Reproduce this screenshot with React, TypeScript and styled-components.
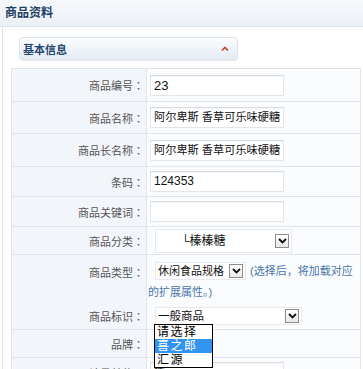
import React from 'react';
import styled, { createGlobalStyle } from 'styled-components';

const GlobalStyle = createGlobalStyle`
  html, body {
    margin: 0;
    padding: 0;
    background: #fff;
    width: 363px;
    height: 369px;
    overflow: hidden;
  }
  body {
    font-family: "Liberation Sans", "Noto Sans CJK SC", sans-serif;
    font-size: 12px;
    color: #333;
  }
  * {
    box-sizing: border-box;
  }
`;

const Header = styled.div`
  height: 27px;
  line-height: 26px;
  padding-left: 5px;
  border-bottom: 1px solid #dbe2ea;
  background: linear-gradient(#f7f9fc, #ebf0f6);
  font-size: 12px;
  font-weight: bold;
  color: #1e3f66;
`;

const Panel = styled.div`
  margin: 0 1px 0 2px;
  padding: 10px 0 0 8px;
  border-left: 1px solid #dfe5ec;
  height: 342px;
  overflow: hidden;
`;

const SectionBar = styled.div`
  width: 219px;
  height: 23px;
  margin-left: 8px;
  padding: 0 8px 0 3px;
  display: flex;
  align-items: center;
  justify-content: space-between;
  border: 1px solid #dbe3ec;
  border-radius: 4px;
  background: linear-gradient(#fafcfe, #e5ecf4);
  box-shadow: 0 1px 1px rgba(150, 170, 190, 0.25);
  font-size: 11px;
  font-weight: bold;
  color: #22466f;
`;

const Table = styled.div`
  width: 350px;
  margin-top: 8px;
  border: 1px solid #dfe4ea;
  border-bottom: none;
`;

const Row = styled.div<{ $h: number }>`
  display: grid;
  grid-template-columns: 135px 1fr;
  height: ${(p) => p.$h}px;
  border-bottom: 1px solid #e1e6ec;
`;

const Label = styled.div<{ $top?: boolean }>`
  display: flex;
  justify-content: flex-end;
  align-items: ${(p) => (p.$top ? 'flex-start' : 'center')};
  padding: ${(p) => (p.$top ? '9px 2px 0 0' : '0 2px 0 0')};
  border-right: 1px solid #e1e6ec;
  background: #f2f6fa;
  font-size: 11px;
  color: #555;
`;

const Colon = styled.span`
  font-family: "Noto Sans CJK JP", sans-serif;
`;

const Value = styled.div<{ $flow?: boolean }>`
  display: ${(p) => (p.$flow ? 'block' : 'flex')};
  align-items: center;
  padding: ${(p) => (p.$flow ? '5px 4px 0 1px' : '0 0 0 1px')};
  line-height: ${(p) => (p.$flow ? '20px' : 'normal')};
  background: #fbfcfd;
`;

const Field = styled.div<{ $size?: number }>`
  width: 134px;
  height: 21px;
  margin-left: 2px;
  padding-left: 3px;
  border: 1px solid #e2e6eb;
  border-top-color: #d6dce3;
  background: #fff;
  box-shadow: inset 0 1px 1px rgba(0, 0, 0, 0.04);
  font-size: ${(p) => p.$size ?? 11.2}px;
  line-height: 19px;
  color: #111;
  white-space: nowrap;
  overflow: hidden;
`;

const SelectBox = styled.div<{ $w: number; $h: number; $indent?: number }>`
  position: relative;
  display: inline-flex;
  align-items: center;
  vertical-align: middle;
  width: ${(p) => p.$w}px;
  height: ${(p) => p.$h}px;
  margin-left: 7px;
  padding: 0 2px 0 ${(p) => p.$indent ?? 2}px;
  border: 1px solid #e6e9ed;
  background: #fff;
  font-size: 11.5px;
  line-height: 14px;
  color: #111;
`;

const SelectText = styled.span<{ $size?: number }>`
  flex: 1;
  min-width: 0;
  font-size: ${(p) => p.$size ?? 11.5}px;
  white-space: nowrap;
  overflow: hidden;
`;

const ArrowBox = styled.span`
  flex: none;
  display: flex;
  align-items: center;
  justify-content: center;
  width: 14px;
  height: 14px;
  border: 1px solid #8d8d8d;
  background: linear-gradient(#ffffff, #e8e8e8);
`;

const Note = styled.span<{ $gap?: number }>`
  margin-left: ${(p) => p.$gap ?? 0}px;
  font-size: 11px;
  color: #4a76ad;
  vertical-align: middle;
`;

const Dropdown = styled.div`
  position: absolute;
  left: -2px;
  top: 100%;
  width: 59px;
  border: 1px solid #000;
  background: #fff;
  z-index: 2;
`;

const Option = styled.div<{ $active?: boolean }>`
  height: 14px;
  padding-left: 2px;
  line-height: 14px;
  font-size: 12px;
  letter-spacing: 1.5px;
  color: ${(p) => (p.$active ? '#fff' : '#000')};
  background: ${(p) => (p.$active ? '#3393f0' : '#fff')};
`;

const Arrow = () => (
  <svg width="9" height="6" viewBox="0 0 9 6">
    <path d="M1 1 L4.5 4.5 L8 1" fill="none" stroke="#111" strokeWidth="1.8" />
  </svg>
);

const Caret = () => (
  <svg width="8" height="6" viewBox="0 0 8 6">
    <path d="M1 4.5 L4 1.5 L7 4.5" fill="none" stroke="#c8432b" strokeWidth="1.6" />
  </svg>
);

const FieldLabel: React.FC<{ text: string; top?: boolean }> = ({ text, top }) => (
  <Label $top={top}>
    {text}
    <Colon>：</Colon>
  </Label>
);

const App: React.FC = () => (
  <>
    <GlobalStyle />
    <Header>商品资料</Header>
    <Panel>
      <SectionBar>
        基本信息
        <Caret />
      </SectionBar>
      <Table>
        <Row $h={33}>
          <FieldLabel text="商品编号" />
          <Value>
            <Field $size={13}>23</Field>
          </Value>
        </Row>
        <Row $h={32}>
          <FieldLabel text="商品名称" />
          <Value>
            <Field>阿尔卑斯 香草可乐味硬糖</Field>
          </Value>
        </Row>
        <Row $h={33}>
          <FieldLabel text="商品长名称" />
          <Value>
            <Field>阿尔卑斯 香草可乐味硬糖</Field>
          </Value>
        </Row>
        <Row $h={30}>
          <FieldLabel text="条码" />
          <Value>
            <Field $size={12}>124353</Field>
          </Value>
        </Row>
        <Row $h={30}>
          <FieldLabel text="商品关键词" />
          <Value>
            <Field />
          </Value>
        </Row>
        <Row $h={28}>
          <FieldLabel text="商品分类" />
          <Value>
            <SelectBox $w={137} $h={24} $indent={25}>
              <SelectText $size={12}>└榛榛糖</SelectText>
              <ArrowBox>
                <Arrow />
              </ArrowBox>
            </SelectBox>
          </Value>
        </Row>
        <Row $h={47}>
          <FieldLabel text="商品类型" top />
          <Value $flow>
            <SelectBox $w={91} $h={18}>
              <SelectText $size={11}>休闲食品规格</SelectText>
              <ArrowBox>
                <Arrow />
              </ArrowBox>
            </SelectBox>
            <Note $gap={4}>(选择后，将加载对应</Note>
            <br />
            <Note>的扩展属性。)</Note>
          </Value>
        </Row>
        <Row $h={28}>
          <FieldLabel text="商品标识" />
          <Value>
            <SelectBox $w={147} $h={18}>
              <SelectText>一般商品</SelectText>
              <ArrowBox>
                <Arrow />
              </ArrowBox>
              <Dropdown>
                <Option>请选择</Option>
                <Option $active>喜之郎</Option>
                <Option>汇源</Option>
              </Dropdown>
            </SelectBox>
          </Value>
        </Row>
        <Row $h={28}>
          <FieldLabel text="品牌" />
          <Value />
        </Row>
        <Row $h={30}>
          <FieldLabel text="计量单位" />
          <Value>
            <Field>袋</Field>
          </Value>
        </Row>
      </Table>
    </Panel>
  </>
);

export default App;
